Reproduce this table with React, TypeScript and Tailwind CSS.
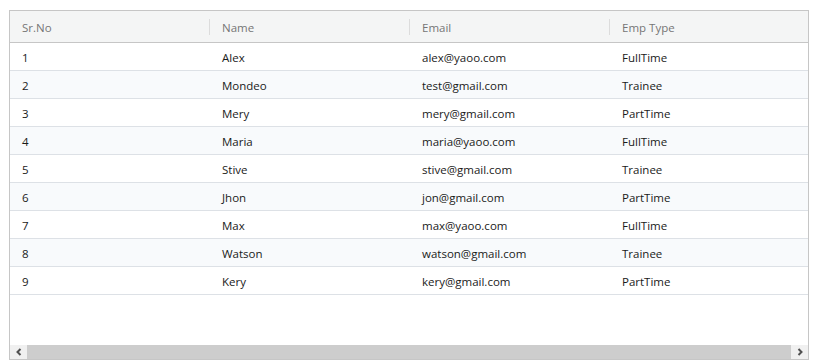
import React from "react"

type Employee = {
  id: number
  name: string
  email: string
  type: string
}

const employees: Employee[] = [
  { id: 1, name: "Alex", email: "alex@yaoo.com", type: "FullTime" },
  { id: 2, name: "Mondeo", email: "test@gmail.com", type: "Trainee" },
  { id: 3, name: "Mery", email: "mery@gmail.com", type: "PartTime" },
  { id: 4, name: "Maria", email: "maria@yaoo.com", type: "FullTime" },
  { id: 5, name: "Stive", email: "stive@gmail.com", type: "Trainee" },
  { id: 6, name: "Jhon", email: "jon@gmail.com", type: "PartTime" },
  { id: 7, name: "Max", email: "max@yaoo.com", type: "FullTime" },
  { id: 8, name: "Watson", email: "watson@gmail.com", type: "Trainee" },
  { id: 9, name: "Kery", email: "kery@gmail.com", type: "PartTime" },
]

const headers = ["Sr.No", "Name", "Email", "Emp Type"]

export default function App() {
  return (
    <div className="w-[821px] h-[360px] bg-white pt-[10px] pl-[9px] font-['Open_Sans',sans-serif]">
      <div className="w-[800px] h-[350px] border border-[#c6c6c6] flex flex-col overflow-hidden">

        {/* header */}
        <div className="flex h-[32px] shrink-0 bg-[#f4f5f5] border-b border-[#c6c6c6]">
          {headers.map((h, i) => (
            <div
              key={h}
              className="relative w-[200px] shrink-0 flex items-center pl-[12px] pt-[2px] text-[11.5px] text-[#767676]"
            >
              {h}
              {i < headers.length - 1 && (
                <span className="absolute right-0 top-[8px] h-[16px] w-px bg-[#dcdcdc]" />
              )}
            </div>
          ))}
        </div>

        {/* rows */}
        <div className="flex-1">
          {employees.map((e, i) => (
            <div
              key={e.id}
              className={`flex h-[28px] pt-[2px] border-b border-[#dde1e6] text-[11.5px] text-[#1a1a1a] ${
                i % 2 === 1 ? "bg-[#f8fafc]" : "bg-white"
              }`}
            >
              <div className="w-[200px] shrink-0 flex items-center pl-[12px]">{e.id}</div>
              <div className="w-[200px] shrink-0 flex items-center pl-[12px]">{e.name}</div>
              <div className="w-[200px] shrink-0 flex items-center pl-[12px]">{e.email}</div>
              <div className="w-[200px] shrink-0 flex items-center pl-[12px]">{e.type}</div>
            </div>
          ))}
        </div>

        {/* horizontal scrollbar */}
        <div className="flex h-[14px] shrink-0 bg-[#cdcdcd]">
          <div className="w-[17px] flex items-center justify-center bg-[#f0f0f0]">
            <svg width="8" height="8" viewBox="0 0 8 8">
              <path d="M5.5 1 L2.5 4 L5.5 7" fill="none" stroke="#505050" strokeWidth="2" />
            </svg>
          </div>
          <div className="flex-1" />
          <div className="w-[17px] flex items-center justify-center bg-[#f0f0f0]">
            <svg width="8" height="8" viewBox="0 0 8 8">
              <path d="M2.5 1 L5.5 4 L2.5 7" fill="none" stroke="#505050" strokeWidth="2" />
            </svg>
          </div>
        </div>
      </div>
    </div>
  )
}
